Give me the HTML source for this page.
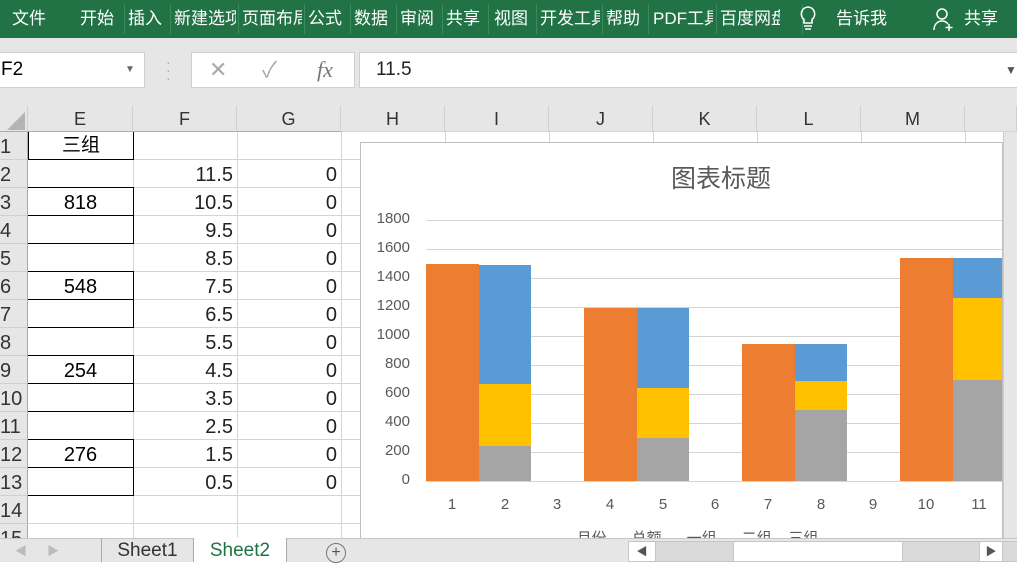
<!DOCTYPE html>
<html><head><meta charset="utf-8"><style>
*{margin:0;padding:0;box-sizing:border-box}
body{width:1017px;height:562px;overflow:hidden;position:relative;background:#fff;font-family:"Liberation Sans","Noto Sans CJK SC",sans-serif}
.a{position:absolute}
.rib{left:0;top:0;width:1017px;height:38px;background:#217346;color:#fff;font-size:17px}
.rib span{position:absolute;top:4px;white-space:nowrap;overflow:hidden}
.sep{position:absolute;top:4px;width:1px;height:30px;background:#3d8a5c}
.ch{top:106px;height:26px;background:#e6e6e6;border-bottom:1px solid #ababab;font-size:18px;color:#333;text-align:center;line-height:26px;border-right:1px solid #d0d0d0}
.rh{left:0;width:28px;height:28px;background:#e6e6e6;font-size:20px;color:#333;line-height:30px;border-bottom:1px solid #d0d0d0;border-right:1px solid #ababab;overflow:hidden}
.gl{height:1px;background:#d4d4d4}
.vl{width:1px;background:#d4d4d4}
.num{font-size:20px;color:#222;text-align:right;height:28px;line-height:30px}
.yl{font-size:15px;color:#595959;width:50px;text-align:right;left:360px}
.xl{font-size:15px;color:#595959;width:40px;text-align:center;top:496px}
.b{position:absolute}
</style></head><body>
<div class="a rib">
<span style="left:12px">文件</span>
<span style="left:80px">开始</span><div class="sep" style="left:124px"></div>
<span style="left:128px">插入</span><div class="sep" style="left:170px"></div>
<span style="left:174px;width:62px">新建选项</span><div class="sep" style="left:238px"></div>
<span style="left:242px;width:60px">页面布局</span><div class="sep" style="left:304px"></div>
<span style="left:308px">公式</span><div class="sep" style="left:350px"></div>
<span style="left:354px">数据</span><div class="sep" style="left:396px"></div>
<span style="left:400px">审阅</span><div class="sep" style="left:442px"></div>
<span style="left:446px">共享</span><div class="sep" style="left:488px"></div>
<span style="left:494px">视图</span><div class="sep" style="left:536px"></div>
<span style="left:540px;width:60px">开发工具</span><div class="sep" style="left:602px"></div>
<span style="left:606px">帮助</span><div class="sep" style="left:648px"></div>
<span style="left:653px;width:60px">PDF工具</span><div class="sep" style="left:716px"></div>
<span style="left:720px;width:60px">百度网盘</span><div class="sep" style="left:802px"></div>
<svg class="a" style="left:797px;top:4px" width="22" height="28"><path d="M11 3a7 7 0 0 0-4 12.5V19h8v-3.5A7 7 0 0 0 11 3z" fill="none" stroke="#fff" stroke-width="1.6"/><path d="M7 22h8M8 25h6" stroke="#fff" stroke-width="1.6"/></svg>
<span style="left:836px">告诉我</span>
<svg class="a" style="left:932px;top:6px" width="24" height="26"><circle cx="10" cy="8" r="5" fill="none" stroke="#fff" stroke-width="1.5"/><path d="M2 24c0-6 4-9 8-9s5 2 6 3M17 18v7M13.5 21.5h7" fill="none" stroke="#fff" stroke-width="1.5"/></svg>
<span style="left:964px">共享</span>
</div>
<div class="a" style="left:0;top:38px;width:1017px;height:68px;background:#e6e6e6"></div>
<div class="a" style="left:0;top:52px;width:145px;height:36px;background:#fff;border:1px solid #d0d0d0;border-left:none;font-size:19px;line-height:34px;padding-left:1px">F2<span class="a" style="left:125px;top:0;font-size:10px;color:#666">▼</span></div>
<div class="a" style="left:166px;top:58px;color:#aaa;font-size:14px;line-height:8px">·<br>·<br>·</div>
<div class="a" style="left:191px;top:52px;width:164px;height:36px;background:#fff;border:1px solid #d0d0d0;color:#aaa;font-size:22px;line-height:34px"><span class="a" style="left:17px">✕</span><span class="a" style="left:70px">✓</span><span class="a" style="left:125px;font-family:'Liberation Serif',serif;font-style:italic;color:#777">fx</span></div>
<div class="a" style="left:359px;top:52px;width:660px;height:36px;background:#fff;border:1px solid #d0d0d0;font-size:19px;line-height:34px;padding-left:16px;color:#222">11.5<span class="a" style="left:645px;top:0;font-size:12px;color:#555">▼</span></div>
<div class="a ch" style="left:0;width:28px"><svg width="26" height="26"><path d="M24 6V24H6Z" fill="#b4b4b4"/></svg></div>
<div class="a ch" style="left:28px;width:105px">E</div>
<div class="a ch" style="left:133px;width:104px">F</div>
<div class="a ch" style="left:237px;width:104px">G</div>
<div class="a ch" style="left:341px;width:104px">H</div>
<div class="a ch" style="left:445px;width:104px">I</div>
<div class="a ch" style="left:549px;width:104px">J</div>
<div class="a ch" style="left:653px;width:104px">K</div>
<div class="a ch" style="left:757px;width:104px">L</div>
<div class="a ch" style="left:861px;width:104px">M</div>
<div class="a ch" style="left:965px;width:52px"></div>
<div class="a rh" style="top:132px">1</div><div class="a rh" style="top:160px">2</div><div class="a rh" style="top:188px">3</div><div class="a rh" style="top:216px">4</div><div class="a rh" style="top:244px">5</div><div class="a rh" style="top:272px">6</div><div class="a rh" style="top:300px">7</div><div class="a rh" style="top:328px">8</div><div class="a rh" style="top:356px">9</div><div class="a rh" style="top:384px">10</div><div class="a rh" style="top:412px">11</div><div class="a rh" style="top:440px">12</div><div class="a rh" style="top:468px">13</div><div class="a rh" style="top:496px">14</div><div class="a rh" style="top:524px">15</div>
<div class="a gl" style="left:28px;top:159px;width:332px"></div><div class="a gl" style="left:28px;top:187px;width:332px"></div><div class="a gl" style="left:28px;top:215px;width:332px"></div><div class="a gl" style="left:28px;top:243px;width:332px"></div><div class="a gl" style="left:28px;top:271px;width:332px"></div><div class="a gl" style="left:28px;top:299px;width:332px"></div><div class="a gl" style="left:28px;top:327px;width:332px"></div><div class="a gl" style="left:28px;top:355px;width:332px"></div><div class="a gl" style="left:28px;top:383px;width:332px"></div><div class="a gl" style="left:28px;top:411px;width:332px"></div><div class="a gl" style="left:28px;top:439px;width:332px"></div><div class="a gl" style="left:28px;top:467px;width:332px"></div><div class="a gl" style="left:28px;top:495px;width:332px"></div><div class="a gl" style="left:28px;top:523px;width:332px"></div>
<div class="a gl" style="left:341px;top:131px;width:676px"></div>
<div class="a vl" style="left:133px;top:132px;height:406px"></div><div class="a vl" style="left:237px;top:132px;height:406px"></div><div class="a vl" style="left:341px;top:132px;height:406px"></div><div class="a vl" style="left:445px;top:132px;height:10px"></div><div class="a vl" style="left:549px;top:132px;height:10px"></div><div class="a vl" style="left:653px;top:132px;height:10px"></div><div class="a vl" style="left:757px;top:132px;height:10px"></div><div class="a vl" style="left:861px;top:132px;height:10px"></div><div class="a vl" style="left:965px;top:132px;height:10px"></div>
<div class="a" style="left:28px;top:132px;width:106px;height:28px;border:1px solid #000;border-top:none;text-align:center;font-size:19px;line-height:28px">三组</div>
<div class="a" style="left:28px;top:187px;width:106px;height:57px;border:1px solid #000;border-left:none"><div style="height:28px;border-bottom:1px solid #000;text-align:center;font-size:20px;line-height:30px">818</div></div>
<div class="a" style="left:28px;top:271px;width:106px;height:57px;border:1px solid #000;border-left:none"><div style="height:28px;border-bottom:1px solid #000;text-align:center;font-size:20px;line-height:30px">548</div></div>
<div class="a" style="left:28px;top:355px;width:106px;height:57px;border:1px solid #000;border-left:none"><div style="height:28px;border-bottom:1px solid #000;text-align:center;font-size:20px;line-height:30px">254</div></div>
<div class="a" style="left:28px;top:439px;width:106px;height:57px;border:1px solid #000;border-left:none"><div style="height:28px;border-bottom:1px solid #000;text-align:center;font-size:20px;line-height:30px">276</div></div>
<div class="a" style="left:133px;top:160px;width:100px"><div class="num">11.5</div><div class="num">10.5</div><div class="num">9.5</div><div class="num">8.5</div><div class="num">7.5</div><div class="num">6.5</div><div class="num">5.5</div><div class="num">4.5</div><div class="num">3.5</div><div class="num">2.5</div><div class="num">1.5</div><div class="num">0.5</div></div>
<div class="a" style="left:237px;top:160px;width:100px"><div class="num">0</div><div class="num">0</div><div class="num">0</div><div class="num">0</div><div class="num">0</div><div class="num">0</div><div class="num">0</div><div class="num">0</div><div class="num">0</div><div class="num">0</div><div class="num">0</div><div class="num">0</div></div>
<div class="a" style="left:360px;top:142px;width:643px;height:400px;background:#fff;border:1px solid #bfbfbf;overflow:hidden">
<div class="a" style="left:0;top:16px;width:720px;text-align:center;font-size:25px;color:#595959">图表标题</div>
</div>
<div class="a" style="left:560px;top:529px;width:340px;height:9px;overflow:hidden;font-size:15px;color:#595959;white-space:nowrap;line-height:20px">&nbsp;&nbsp;&nbsp;&nbsp;月份&nbsp;&nbsp;&nbsp;&nbsp;&nbsp;&nbsp;总额&nbsp;&nbsp;&nbsp;&nbsp;&nbsp;&nbsp;一组&nbsp;&nbsp;&nbsp;&nbsp;&nbsp;&nbsp;二组&nbsp;&nbsp;&nbsp;&nbsp;三组</div>
<div class="a gl" style="left:426px;top:220px;width:576px"></div><div class="a gl" style="left:426px;top:249px;width:576px"></div><div class="a gl" style="left:426px;top:278px;width:576px"></div><div class="a gl" style="left:426px;top:307px;width:576px"></div><div class="a gl" style="left:426px;top:336px;width:576px"></div><div class="a gl" style="left:426px;top:365px;width:576px"></div><div class="a gl" style="left:426px;top:394px;width:576px"></div><div class="a gl" style="left:426px;top:423px;width:576px"></div><div class="a gl" style="left:426px;top:452px;width:576px"></div><div class="a gl" style="left:426px;top:481px;width:576px"></div>
<div class="a yl" style="top:210px">1800</div><div class="a yl" style="top:239px">1600</div><div class="a yl" style="top:268px">1400</div><div class="a yl" style="top:297px">1200</div><div class="a yl" style="top:326px">1000</div><div class="a yl" style="top:355px">800</div><div class="a yl" style="top:384px">600</div><div class="a yl" style="top:413px">400</div><div class="a yl" style="top:442px">200</div><div class="a yl" style="top:471px">0</div>
<div class="b" style="left:426px;top:264px;width:53px;height:217px;background:#ED7D31"></div>
<div class="b" style="left:479px;top:265px;width:52px;height:119px;background:#5B9BD5"></div>
<div class="b" style="left:479px;top:384px;width:52px;height:62px;background:#FFC000"></div>
<div class="b" style="left:479px;top:446px;width:52px;height:35px;background:#A5A5A5"></div>
<div class="b" style="left:584px;top:308px;width:53px;height:173px;background:#ED7D31"></div>
<div class="b" style="left:637px;top:308px;width:52px;height:80px;background:#5B9BD5"></div>
<div class="b" style="left:637px;top:388px;width:52px;height:50px;background:#FFC000"></div>
<div class="b" style="left:637px;top:438px;width:52px;height:43px;background:#A5A5A5"></div>
<div class="b" style="left:742px;top:344px;width:53px;height:137px;background:#ED7D31"></div>
<div class="b" style="left:795px;top:344px;width:52px;height:37px;background:#5B9BD5"></div>
<div class="b" style="left:795px;top:381px;width:52px;height:29px;background:#FFC000"></div>
<div class="b" style="left:795px;top:410px;width:52px;height:71px;background:#A5A5A5"></div>
<div class="b" style="left:900px;top:258px;width:53px;height:223px;background:#ED7D31"></div>
<div class="b" style="left:953px;top:258px;width:49px;height:40px;background:#5B9BD5"></div>
<div class="b" style="left:953px;top:298px;width:49px;height:82px;background:#FFC000"></div>
<div class="b" style="left:953px;top:380px;width:49px;height:101px;background:#A5A5A5"></div>
<div class="a xl" style="left:432px">1</div><div class="a xl" style="left:485px">2</div><div class="a xl" style="left:537px">3</div><div class="a xl" style="left:590px">4</div><div class="a xl" style="left:643px">5</div><div class="a xl" style="left:695px">6</div><div class="a xl" style="left:748px">7</div><div class="a xl" style="left:801px">8</div><div class="a xl" style="left:853px">9</div><div class="a xl" style="left:906px">10</div><div class="a xl" style="left:959px">11</div>
<div class="a" style="left:1003px;top:132px;width:14px;height:406px;background:#e6e6e6;border-left:1px solid #ccc"></div>
<div class="a" style="left:0;top:538px;width:1017px;height:24px;background:#e6e6e6;border-top:1px solid #c6c6c6"></div>
<div class="a" style="left:15px;top:542px;color:#bbb;font-size:12px">◀</div>
<div class="a" style="left:47px;top:542px;color:#bbb;font-size:12px">▶</div>
<div class="a" style="left:101px;top:538px;width:93px;height:24px;border-left:1px solid #aaa;border-right:1px solid #aaa;font-size:19px;line-height:26px;text-align:center;color:#333">Sheet1</div>
<div class="a" style="left:194px;top:537px;width:92px;height:25px;background:#fff;font-size:19px;line-height:28px;text-align:center;color:#217346">Sheet2</div>
<div class="a" style="left:286px;top:538px;width:1px;height:24px;background:#aaa"></div>
<div class="a" style="left:326px;top:543px;width:20px;height:20px;border:1px solid #777;border-radius:50%;text-align:center;line-height:18px;color:#555;font-size:16px">+</div>
<div class="a" style="left:628px;top:541px;width:686px;height:21px;background:#dadada;border:1px solid #c6c6c6"></div>
<div class="a" style="left:628px;top:541px;width:28px;height:21px;background:#fff;border:1px solid #c6c6c6;font-size:11px;text-align:center;line-height:20px;color:#555">◀</div>
<div class="a" style="left:733px;top:541px;width:170px;height:21px;background:#fff;border:1px solid #c6c6c6"></div>
<div class="a" style="left:979px;top:541px;width:24px;height:21px;background:#fff;border:1px solid #c6c6c6;font-size:11px;text-align:center;line-height:20px;color:#555">▶</div>
</body></html>
